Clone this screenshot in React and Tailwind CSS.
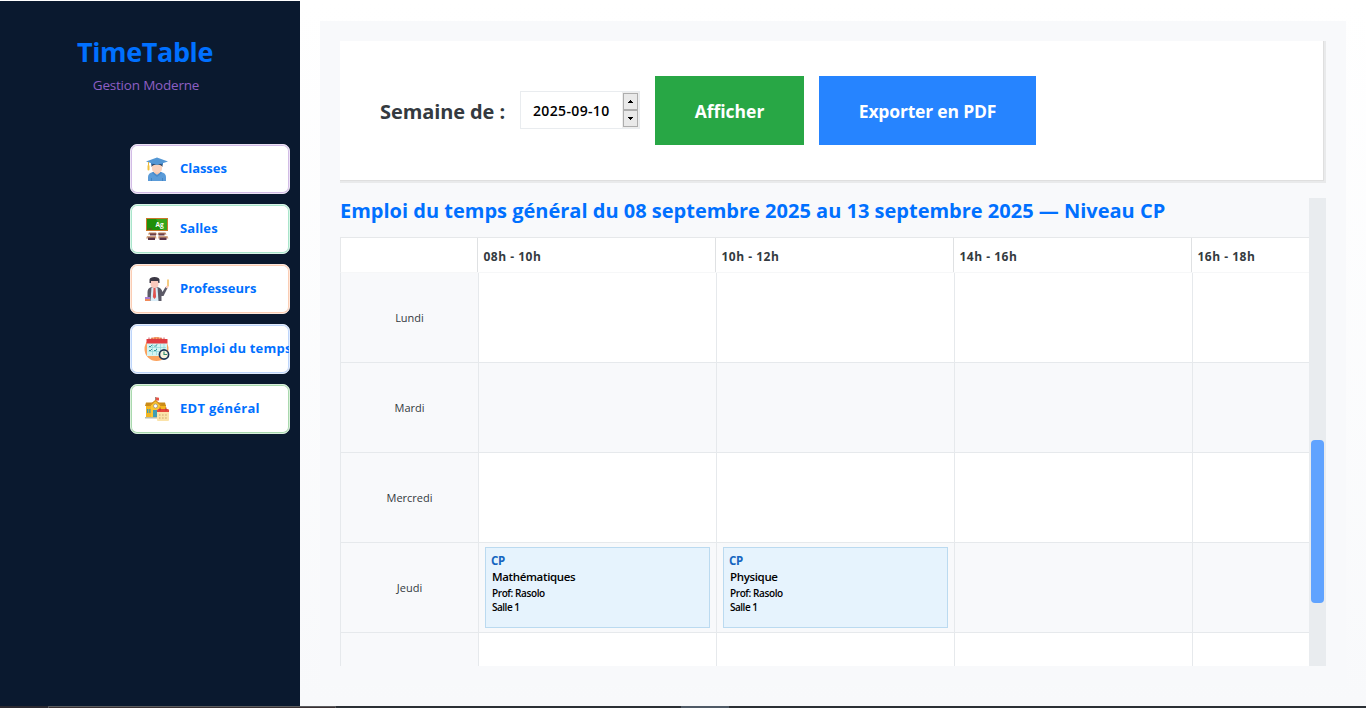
import React from "react";

const HatIcon = () => (
  <svg width="26" height="26" viewBox="0 0 26 26" className="shrink-0">
    <path d="M4 25v-4q0-4 5-5h8q5 1 5 5v4z" fill="#5b9bd8" />
    <path d="M10 13h6v4l-3 2-3-2z" fill="#f6c7ae" />
    <path d="M9 16l4 3 4-3 1 1-5 4-5-4z" fill="#4a8bcb" />
    <rect x="8" y="7" width="10" height="9.500" rx="4" fill="#fcd3bd" />
    <path d="M7.500 6h11v5q-1-2.500-5.500-2.500T7.500 11z" fill="#263f5c" />
    <path d="M7 4.500h12v4.500q-6-2.500-12 0z" fill="#3f7fc0" />
    <path d="M13 1.500L24 5.500 13 9 2 5.500z" fill="#5497d4" />
    <path d="M4.500 6v4" stroke="#e8b93a" strokeWidth="1" />
    <rect x="3.500" y="9" width="2" height="5.500" rx="1" fill="#f2c23e" />
    <path d="M7.500 22v3M18.500 22v3" stroke="#3f7fc0" strokeWidth="0.800" />
  </svg>
);

const BoardIcon = () => (
  <svg width="26" height="26" viewBox="0 0 26 26" className="shrink-0">
    <rect x="2" y="2" width="22" height="13" fill="#c9782a" />
    <rect x="3" y="3" width="20" height="11" fill="#1f8f0a" />
    <path d="M12 3h11v11h-4z" fill="#37a51c" />
    <path d="M4 13h4" stroke="#7a3c1e" strokeWidth="1.200" />
    <text x="11.500" y="10.500" fontSize="6.500" fontWeight="700" fill="#fff" fontFamily="Open Sans, sans-serif">Ag</text>
    <path d="M5 16.500h7l1 2H4zM14.500 16.500h7l1 2h-9z" fill="#b98363" />
    <path d="M6 17.500h6v2H6zM14.500 17.500h6v2h-6z" fill="#6a3f4a" />
    <path d="M3 20h9l.5 2.500H2zM14.500 20h9l1 2.500H14z" fill="#d3a482" />
    <path d="M4 21.500h7v2.500H4zM15.500 21.500h7v2.500h-7z" fill="#5a3346" />
  </svg>
);

const TeacherIcon = () => (
  <svg width="26" height="26" viewBox="0 0 26 26" className="shrink-0">
    <path d="M3.500 25v-9q0-4 4-5h6q4 1 5 5l3-5 2 1-4 8h-2v5z" fill="#5b5966" />
    <path d="M7.500 11.500h6l1 13.500h-8z" fill="#d9edf8" />
    <path d="M9.500 12h2l.6 9-1.600 2-1.600-2z" fill="#e0524f" />
    <rect x="6.500" y="3" width="8" height="9" rx="4" fill="#fbc9bd" />
    <path d="M5.500 7V3.500Q6 1 10.500 1t5 2.500V7h-1.200L14 5H7v2z" fill="#3b3744" />
    <path d="M24 3.500v7" stroke="#f2bb57" strokeWidth="1.500" />
    <circle cx="23" cy="11" r="1.300" fill="#fbc9bd" />
    <rect x="1" y="21" width="5" height="2" fill="#a77bd0" />
    <rect x="1" y="23" width="5" height="2" fill="#f08a5a" />
  </svg>
);

const CalendarIcon = () => (
  <svg width="26" height="26" viewBox="0 0 26 26" className="shrink-0">
    <circle cx="12.500" cy="13" r="12" fill="#fba35f" />
    <rect x="3" y="4" width="20" height="16" fill="#d5f4f2" />
    <rect x="2.500" y="3" width="21" height="4.500" fill="#e23b40" />
    <path d="M5 1.500v3M8 1.500v3M11 1.500v3M14 1.500v3M17 1.500v3M20 1.500v3" stroke="#c94348" strokeWidth="0.900" />
    <path d="M4.500 11.500H22M4.500 15.500H22M8.500 8v11M12.500 8v11M16.500 8v11M20 8v11" stroke="#8fd6d9" strokeWidth="0.700" />
    <path d="M5 10l1 1 2-2M10 14l1 1 2-2M5 14l1 1 2-2M10 9.500l1 1 2-2" stroke="#238b91" strokeWidth="0.900" fill="none" />
    <circle cx="20" cy="18.500" r="4.600" fill="#f8f2dc" stroke="#1f3553" strokeWidth="1.700" />
    <path d="M20 15.500v3h3" stroke="#2d8b70" strokeWidth="1.100" fill="none" />
  </svg>
);

const SchoolIcon = () => (
  <svg width="26" height="26" viewBox="0 0 26 26" className="shrink-0">
    <path d="M11.500 1v6" stroke="#8a6a55" strokeWidth="0.800" />
    <path d="M12 1.200l3 .6v2.700h-3z" fill="#e65347" />
    <rect x="2" y="9" width="20" height="12" fill="#f3b51f" />
    <path d="M2 6.500h19l1 3.500H1z" fill="#c98b18" />
    <path d="M7 21V9l4.500-4L16 9v12z" fill="#fbc52f" />
    <path d="M5.500 9.500l6-5 6 5" stroke="#d9921c" strokeWidth="1.300" fill="none" />
    <circle cx="11.500" cy="10" r="2" fill="#fff" stroke="#8c8a80" strokeWidth="0.700" />
    <rect x="9" y="14" width="4" height="7" fill="#3f9db4" />
    <path d="M3 13h1.300v4H3zM5.200 13h1.300v4H5.200z" fill="#3f9db4" />
    <path d="M1 21h12v1.500H1z" fill="#b9bba8" />
    <rect x="13" y="13" width="12" height="12" rx="1" fill="#fbe3a9" />
    <path d="M13 16v-1.500q0-1.500 1.500-1.500h9q1.500 0 1.500 1.500V16z" fill="#e5473c" />
    <path d="M16 11.500v3M22 11.500v3" stroke="#a83a35" strokeWidth="1" />
    <path d="M15 19h8M15 22h8" stroke="#c9a06c" strokeWidth="1.200" strokeDasharray="1.500 1.600" />
  </svg>
);

const menu = [
  { label: "Classes", Icon: HatIcon, border: "border-[#ece3f5] inset-ring-[#d2bce6]", track: "tracking-[-0.05px]" },
  { label: "Salles", Icon: BoardIcon, border: "border-[#d9f5e8] inset-ring-[#a9e5cb]", track: "tracking-[0.1px]" },
  { label: "Professeurs", Icon: TeacherIcon, border: "border-[#fde8dc] inset-ring-[#fbcdb4]", track: "tracking-[0px]" },
  { label: "Emploi du temps", Icon: CalendarIcon, border: "border-[#e0ebfd] inset-ring-[#bdd5fb]", track: "tracking-[0.2px]" },
  { label: "EDT général", Icon: SchoolIcon, border: "border-[#d9efdb] inset-ring-[#a9d9ae]", track: "tracking-[0.27px]" },
];

const hours = ["08h - 10h", "10h - 12h", "14h - 16h", "16h - 18h"];

const days = [
  { name: "Lundi", row: "bg-white", courses: {} },
  { name: "Mardi", row: "bg-[#f8f9fb]", courses: {} },
  { name: "Mercredi", row: "bg-white", courses: {} },
  { name: "Jeudi", row: "bg-[#f8f9fb]", courses: { 0: "Mathématiques", 1: "Physique" } },
  { name: "", row: "bg-white", courses: {} },
];

function Sidebar() {
  return (
    <aside className="flex w-[300px] shrink-0 flex-col bg-[#0a192f]">
      <div className="flex w-[290px] flex-col items-center pt-[31px]">
        <h1 className="h-10 text-[27px] leading-10 font-bold tracking-[-0.4px] whitespace-nowrap text-[#0070ff]">TimeTable</h1>
        <p className="mt-[3px] h-5 pl-[2px] text-[13.5px] leading-5 tracking-[-0.2px] whitespace-nowrap text-[#8e5fc4]">Gestion Moderne</p>
      </div>
      <nav className="mt-[49px] ml-[130px] flex w-40 flex-col gap-[10px]">
        {menu.map(({ label, Icon, border, track }) => (
          <button key={label} className={`flex h-[50px] items-center overflow-hidden rounded-[7px] border bg-white pl-[13px] inset-ring-1 ${border}`}>
            <Icon />
            <span className={`ml-[10px] text-[13px] font-bold whitespace-nowrap text-[#0070ff] ${track}`}>{label}</span>
          </button>
        ))}
      </nav>
    </aside>
  );
}

function WeekBar() {
  return (
    <section className="flex h-[142px] shrink-0 border-r-2 border-b-2 border-[#e9eaeb]">
      <div className="flex flex-1 items-center border-r border-b border-[#dfdfdf] bg-white pl-10">
        <span className="w-[140px] pt-[2px] text-[20px] font-bold tracking-[-0.1px] whitespace-nowrap text-[#343a40]">Semaine de :</span>
        <div className="mb-[2px] flex h-[38px] w-[120px] border border-[#e9ecef] bg-white">
          <span className="flex flex-1 items-center pt-px pl-3 text-[14px] font-semibold tracking-[0.35px] whitespace-nowrap text-black">2025-09-10</span>
          <div className="flex w-[17px] flex-col bg-[#eeeeee] p-px">
            <div className="flex h-[17px] items-center justify-center border border-[#adadad] bg-[#e9e9e9]">
              <svg width="5" height="3" viewBox="0 0 5 3"><path d="M2 0h1v1h1v1h1v1H0V2h1V1h1z" fill="#000" /></svg>
            </div>
            <div className="flex h-[17px] items-center justify-center border border-[#adadad] bg-[#e9e9e9]">
              <svg width="5" height="3" viewBox="0 0 5 3"><path d="M0 0h5v1H4v1H3v1H2V2H1V1H0z" fill="#000" /></svg>
            </div>
          </div>
        </div>
        <button className="ml-[15px] h-[69px] w-[149px] bg-[#28a745] pt-[2px] text-[17.5px] font-bold whitespace-nowrap text-white">Afficher</button>
        <button className="ml-[15px] h-[69px] w-[217px] bg-[#2684ff] pt-[2px] text-[17.5px] font-bold tracking-[-0.18px] whitespace-nowrap text-white">Exporter en PDF</button>
      </div>
    </section>
  );
}

function Course({ name }) {
  return (
    <div className="h-[81px] w-[225px] border border-[#bbdaf0] bg-[#e6f3fd] pt-1 pl-[6px] whitespace-nowrap">
      <p className="-ml-px h-[17px] text-[11.5px] leading-[17px] font-bold tracking-[-0.4px] text-[#1565c0]">CP</p>
      <p className="h-4 text-[11.5px] leading-4 font-semibold tracking-[-0.35px] text-black">{name}</p>
      <p className="mt-px h-[14px] text-[10px] leading-[15px] font-semibold tracking-[-0.4px] text-black">Prof: Rasolo</p>
      <p className="h-[14px] text-[10px] leading-[15px] font-semibold tracking-[-0.5px] text-black">Salle 1</p>
    </div>
  );
}

function Timetable() {
  return (
    <div className="w-[969px] shrink-0 overflow-hidden">
      <h2 className="h-[39px] text-[20px] leading-[26px] font-bold whitespace-nowrap text-[#0070ff]">
        Emploi du temps général du 08 septembre 2025 au 13 septembre 2025 — Niveau CP
      </h2>
      <div className="flex h-9 w-[1093px] border-t border-b border-l border-t-[#e6e8ea] border-b-[#f6f7f8] border-l-[#e6e8ea] bg-white">
        <div className="w-[136px] shrink-0" />
        {hours.map((h) => (
          <div key={h} className="flex w-[238px] shrink-0 items-center border-l border-[#dfe1e3] pt-[3px] pl-[5.5px] text-[12px] font-bold tracking-[0.5px] whitespace-nowrap text-[#343a40]">
            {h}
          </div>
        ))}
      </div>
      {days.map((d, n) => (
        <div key={n} className={`flex h-[90px] w-[1093px] ${d.row}`}>
          <div className="flex w-[138px] shrink-0 items-center justify-center border-b border-l border-[#e6e9ec] bg-[#f8f9fb] pt-[2px] text-[11px] text-[#343a40]">{d.name}</div>
          {hours.map((h, i) => (
            <div key={h} className="w-[238px] shrink-0 border-b border-l border-[#e6e9ec] pt-1 pl-[6px]">
              {d.courses[i] && <Course name={d.courses[i]} />}
            </div>
          ))}
        </div>
      ))}
    </div>
  );
}

export default function App() {
  return (
    <div className="flex h-[708px] w-[1366px] flex-col overflow-hidden bg-white font-['Open_Sans','Noto_Sans',sans-serif]">
      <div className="mt-px flex h-[705px]">
        <Sidebar />
        <main className="flex flex-1 bg-linear-to-b from-[#ffffff] to-[#f8f9fb] px-5 py-5">
          <div className="flex flex-1 flex-col bg-[#f8f9fb] p-5">
            <WeekBar />
            <div className="mt-[15px] flex h-[468px]">
              <Timetable />
              <div className="flex w-[17px] justify-center bg-[#e9ecef] pt-[242px]">
                <div className="h-[163px] w-[13px] rounded-[4px] bg-[#60a3ff]" />
              </div>
            </div>
          </div>
        </main>
      </div>
      <footer className="flex h-[2px] bg-[#2b3035]">
        <div className="w-12 bg-[#2b2930]" />
        <div className="w-[288px] border-x border-t border-[#5b5b5d] bg-[#3a3133]" />
        <div className="w-[345px]" />
        <div className="w-12 bg-[#4f5a66]" />
      </footer>
    </div>
  );
}
